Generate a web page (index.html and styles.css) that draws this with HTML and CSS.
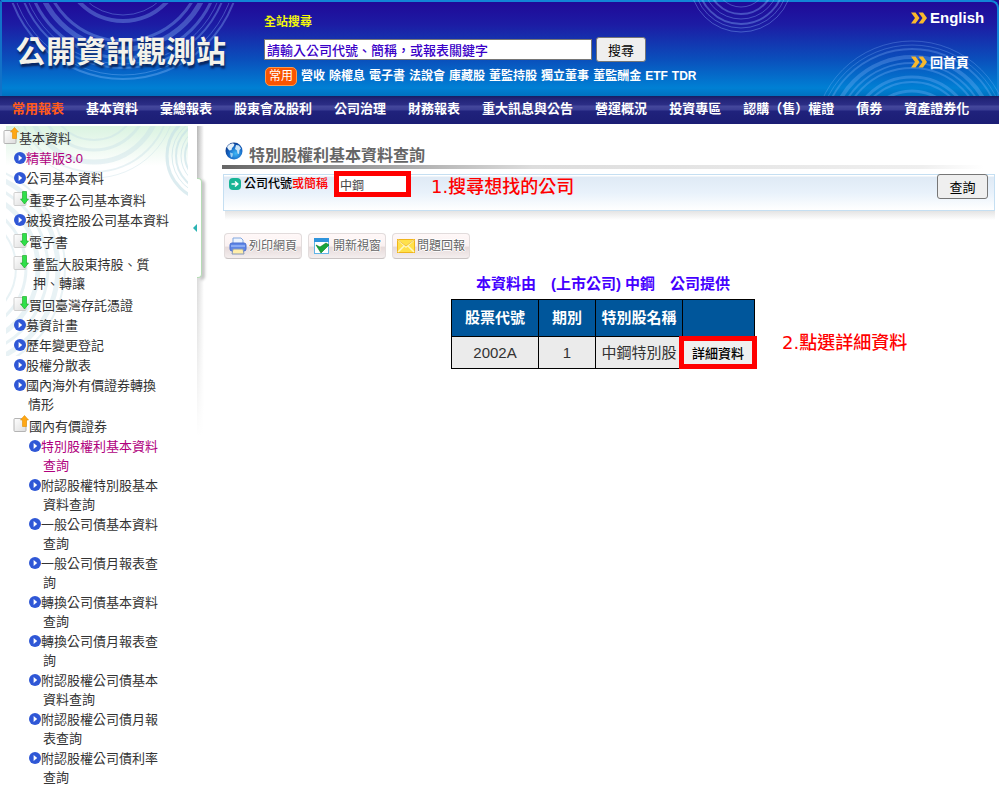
FILE: index.html
```
<!DOCTYPE html>
<html lang="zh-Hant">
<head>
<meta charset="utf-8">
<title>公開資訊觀測站</title>
<link rel="stylesheet" href="styles.css">
</head>
<body>
<svg class="defs" aria-hidden="true">
  <defs>
    <symbol id="i-go" viewBox="0 0 12 12"><circle cx="6" cy="6" r="6" fill="#2f57d6"/><path d="M4.600 3v6L8.200 6z" fill="#fff"/></symbol>
    <linearGradient id="g-page" x1="0" y1="0" x2="1" y2="1"><stop offset="0" stop-color="#fff"/><stop offset="1" stop-color="#dcdcdc"/></linearGradient>
    <symbol id="i-open" viewBox="0 0 16 18"><rect x="1" y="3.500" width="12" height="13" rx="1" fill="url(#g-page)" stroke="#b4b4b4"/><path d="M11.500 0.500l4 4.500h-2v6.500h-4v-6.500h-2z" fill="#ffa714" stroke="#e08e00" stroke-width=".6"/></symbol>
    <symbol id="i-closed" viewBox="0 0 16 18"><rect x="1" y="3.500" width="12" height="13" rx="1" fill="url(#g-page)" stroke="#cfcfcf"/><path d="M11.500 15l4-5h-2v-7.500h-4v7.500h-2z" fill="#2fe04a" stroke="#12a51c" stroke-width=".6"/></symbol>
    <symbol id="i-more" viewBox="0 0 16 12"><path d="M0 0.500h4.500l4 5.500-4 5.500h-4.500l4-5.500zM7.500 .5h4.500l4 5.500-4 5.500h-4.500l4-5.500z" fill="#f9b92c"/></symbol>
  </defs>
</svg>

<header class="site">
  <div class="banner">
    <svg class="rings" aria-hidden="true" fill="none" stroke="#8fc0ff">
      <g stroke-opacity=".34" stroke-width="2">
        <circle cx="123" cy="-42" r="118"/><circle cx="123" cy="-42" r="114" stroke-width="1"/>
        <circle cx="123" cy="-42" r="107"/><circle cx="123" cy="-42" r="103" stroke-width="1"/>
        <circle cx="123" cy="-42" r="97" stroke-width="3"/><circle cx="123" cy="-42" r="88" stroke-width="5"/>
        <circle cx="123" cy="-42" r="80" stroke-width="3"/><circle cx="123" cy="-42" r="60" stroke-width="4"/>
        <circle cx="123" cy="-42" r="54" stroke-width="1"/>
      </g>
    </svg>
    <svg class="rings rings-right" viewBox="0 0 320 96" aria-hidden="true" fill="none" stroke="#8fc0ff">
      <g stroke-opacity=".36">
        <circle cx="62" cy="-19" r="51"/><circle cx="62" cy="-19" r="47"/><circle cx="62" cy="-19" r="43" stroke-width="2"/><circle cx="62" cy="-19" r="38"/><circle cx="62" cy="-19" r="33" stroke-width="2"/><circle cx="62" cy="-19" r="26"/>
      </g>
      <g stroke-opacity=".28" stroke-width="2">
        <circle cx="233" cy="139" r="98" stroke-width="1"/><circle cx="233" cy="139" r="94" stroke-width="1"/><circle cx="233" cy="139" r="90"/>
        <circle cx="233" cy="139" r="82" stroke-width="4"/><circle cx="233" cy="139" r="76"/><circle cx="233" cy="139" r="71"/>
        <circle cx="233" cy="139" r="62" stroke-width="3"/><circle cx="233" cy="139" r="57"/><circle cx="233" cy="139" r="48" stroke-width="3"/>
      </g>
    </svg>
    <h1 class="logo">公開資訊觀測站</h1>
    <form class="search">
      <label class="search-label" for="q">全站搜尋</label>
      <div class="search-row">
        <input class="search-box" id="q" type="text" value="請輸入公司代號、簡稱，或報表關鍵字">
        <button class="button" type="button">搜尋</button>
      </div>
      <div class="hot">
        <span class="hot-tag">常用</span>
        <a href="#">營收</a> <a href="#">除權息</a> <a href="#">電子書</a> <a href="#">法說會</a> <a href="#">庫藏股</a> <a href="#">董監持股</a> <a href="#">獨立董事</a> <a href="#">董監酬金</a> <a href="#">ETF</a> <a href="#">TDR</a>
      </div>
    </form>
    <div class="quick">
      <a class="quick-link english" href="#"><svg class="more"><use href="#i-more"/></svg>English</a>
      <a class="quick-link" href="#"><svg class="more"><use href="#i-more"/></svg>回首頁</a>
    </div>
  </div>
  <nav class="menu">
    <a class="current" href="#">常用報表</a><a href="#">基本資料</a><a href="#">彙總報表</a><a href="#">股東會及股利</a><a href="#">公司治理</a><a href="#">財務報表</a><a href="#">重大訊息與公告</a><a href="#">營運概況</a><a href="#">投資專區</a><a href="#">認購（售）權證</a><a href="#">債券</a><a href="#">資產證券化</a>
  </nav>
</header>

<div class="page">
  <aside class="side">
    <svg class="side-rings" viewBox="0 0 182 230" aria-hidden="true" fill="none" stroke="#c5dfe6">
      <g stroke-opacity=".6">
        <circle cx="206" cy="30" r="45" stroke-width="3"/><circle cx="206" cy="30" r="40"/><circle cx="206" cy="30" r="36" stroke-width="2"/><circle cx="206" cy="30" r="31"/><circle cx="206" cy="30" r="27" stroke-width="2"/>
      </g>
      <g stroke-opacity=".4">
        <circle cx="88" cy="-30" r="66" stroke-width="5"/><circle cx="88" cy="-30" r="76" stroke-width="2"/><circle cx="88" cy="-30" r="82"/><circle cx="88" cy="-30" r="54" stroke-width="3"/><circle cx="88" cy="-30" r="44" stroke-width="2"/>
        <circle cx="-46" cy="142" r="105" stroke-width="2"/><circle cx="-46" cy="142" r="98" stroke-width="5"/><circle cx="-46" cy="142" r="88" stroke-width="3"/><circle cx="-46" cy="142" r="78" stroke-width="5"/><circle cx="-46" cy="142" r="66" stroke-width="3"/><circle cx="-46" cy="142" r="56" stroke-width="2"/>
      </g>
    </svg>
    <ul class="tree">
      <li class="doc top"><svg><use href="#i-open"/></svg><a href="#">基本資料</a></li>
      <li class="active"><svg><use href="#i-go"/></svg><a href="#">精華版3.0</a></li>
      <li><svg><use href="#i-go"/></svg><a href="#">公司基本資料</a></li>
      <li class="doc"><svg><use href="#i-closed"/></svg><a href="#">重要子公司基本資料</a></li>
      <li><svg><use href="#i-go"/></svg><a href="#">被投資控股公司基本資料</a></li>
      <li class="doc"><svg><use href="#i-closed"/></svg><a href="#">電子書</a></li>
      <li class="doc"><svg><use href="#i-closed"/></svg><a href="#">&nbsp;董監大股東持股、質<br>押、轉讓</a></li>
      <li class="doc"><svg><use href="#i-closed"/></svg><a href="#">買回臺灣存託憑證</a></li>
      <li><svg><use href="#i-go"/></svg><a href="#">募資計畫</a></li>
      <li><svg><use href="#i-go"/></svg><a href="#">歷年變更登記</a></li>
      <li><svg><use href="#i-go"/></svg><a href="#">股權分散表</a></li>
      <li><svg><use href="#i-go"/></svg><a href="#">國內海外有價證券轉換<br>情形</a></li>
      <li class="doc"><svg><use href="#i-open"/></svg><a href="#">國內有價證券</a></li>
      <li class="sub active"><svg><use href="#i-go"/></svg><a href="#">特別股權利基本資料<br>查詢</a></li>
      <li class="sub"><svg><use href="#i-go"/></svg><a href="#">附認股權特別股基本<br>資料查詢</a></li>
      <li class="sub"><svg><use href="#i-go"/></svg><a href="#">一般公司債基本資料<br>查詢</a></li>
      <li class="sub"><svg><use href="#i-go"/></svg><a href="#">一般公司債月報表查<br>詢</a></li>
      <li class="sub"><svg><use href="#i-go"/></svg><a href="#">轉換公司債基本資料<br>查詢</a></li>
      <li class="sub"><svg><use href="#i-go"/></svg><a href="#">轉換公司債月報表查<br>詢</a></li>
      <li class="sub"><svg><use href="#i-go"/></svg><a href="#">附認股權公司債基本<br>資料查詢</a></li>
      <li class="sub"><svg><use href="#i-go"/></svg><a href="#">附認股權公司債月報<br>表查詢</a></li>
      <li class="sub"><svg><use href="#i-go"/></svg><a href="#">附認股權公司債利率<br>查詢</a></li>
    </ul>
  </aside>
  <div class="divider">
    <button class="collapse" type="button" aria-label="收合選單"><svg class="collapse-arrow" viewBox="0 0 4 8"><path d="M4 0v8L0 4z" fill="#2bb3b3"/></svg></button>
  </div>
  <main class="main">
    <div class="heading">
      <svg class="globe" viewBox="0 0 18 18" aria-hidden="true"><defs><radialGradient id="g-globe" cx=".6" cy=".65" r=".7"><stop offset="0" stop-color="#3fb8f5"/><stop offset=".6" stop-color="#1465c4"/><stop offset="1" stop-color="#0a3180"/></radialGradient></defs><circle cx="9" cy="9" r="8.500" fill="url(#g-globe)"/><path d="M2 5c1-2 3-3.500 6-3.800l1.500 1.300-1 2-1.500 1.500-.5 2-2 .5L3 7z" fill="#e4f1fb"/><path d="M11 3l3 .5 2 3-1.500 1.500-.5 4-1.500-.5-.5-3-2-1.500z" fill="#c9e4f7"/><path d="M5 10.500l3 1-.5 3-1.500 1z" fill="#9ed0f2"/></svg>
      <h2 class="title">特別股權利基本資料查詢</h2>
    </div>
    <div class="title-bar"></div>
    <form class="query">
      <svg class="query-icon" viewBox="0 0 12 12" aria-hidden="true"><rect width="12" height="12" rx="4" fill="#18b596"/><path d="M2.500 6h6M6 3.500L8.800 6 6 8.500" fill="none" stroke="#fff" stroke-width="1.500"/></svg>
      <label class="query-label" for="co">公司代號<span class="red">或簡稱</span></label>
      <input class="query-box" id="co" type="text" value="中鋼">
      <p class="note">1.搜尋想找的公司</p>
      <button class="button query-button" type="button">查詢</button>
    </form>
    <div class="query-shadow"></div>
    <div class="tools">
      <button class="tool" type="button"><svg viewBox="0 0 18 18"><path d="M4 1h8l2 2v5H4z" fill="#eef5ff" stroke="#83a9df"/><rect x="1" y="6" width="16" height="8" rx="2" fill="#5f86e6" stroke="#4a6fd0"/><path d="M2 9h14" stroke="#b9d1ff"/><path d="M4 12h10l1 5H3z" fill="#ffeeaa" stroke="#8597b8"/></svg>列印網頁</button>
      <button class="tool" type="button"><svg viewBox="0 0 18 18"><rect x="1.500" y="1.500" width="14" height="15" fill="#fff" stroke="#62b5e6"/><path d="M1 1h15v4H1z" fill="#2f94dc"/><path d="M3 8l4 2 6-4 3 2-8 8z" fill="#17a63c" stroke="#08751f" stroke-width=".6"/></svg>開新視窗</button>
      <button class="tool" type="button"><svg viewBox="0 0 18 18"><rect x=".5" y="2.500" width="17" height="13" fill="#ffe14b" stroke="#f0b51c"/><path d="M1 3l8 7 8-7M1 15l6-6M17 15l-6-6" fill="none" stroke="#fff7c0" stroke-width="1.500"/><path d="M1 3l8 6 8-6" fill="none" stroke="#e6ad20" stroke-width=".7"/></svg>問題回報</button>
    </div>
    <div class="result">
      <p class="source">本資料由　(上市公司) 中鋼　公司提供</p>
      <div class="table-wrap">
        <table class="stocks">
          <thead><tr><th class="c-code">股票代號</th><th class="c-term">期別</th><th class="c-name">特別股名稱</th><th class="c-act"></th></tr></thead>
          <tbody><tr><td>2002A</td><td>1</td><td>中鋼特別股</td><td><button class="detail" type="button">詳細資料</button></td></tr></tbody>
        </table>
        <p class="note note-detail">2.點選詳細資料</p>
      </div>
    </div>
  </main>
</div>
</body>
</html>
```

FILE: styles.css
```
* { box-sizing: border-box; }
body { margin: 0; background: #fff; color: #333; font-family: "Liberation Sans", "Noto Sans CJK TC", sans-serif; font-size: 13px; }
a { color: inherit; text-decoration: none; }
h1, h2, p, ul { margin: 0; padding: 0; }
input, button { font-family: inherit; margin: 0; }
.defs { position: absolute; width: 0; height: 0; }

.site { margin-right: 8px; }
.banner { position: relative; display: flex; height: 96px; padding: 3px 15px 0 16px; overflow: hidden; background: linear-gradient(#200a98 3px, #1c1ca4 25px, #0a50bc 60px, #0080d4 88px, #0071c0); }
.banner::before { content: ""; position: absolute; inset: 0; border: 2px solid #1284d6; border-bottom: 0; border-radius: 2px 8px 0 0; border-left-color: #1272c8; }
.rings { position: absolute; left: 0; top: 3px; width: 300px; height: 93px; }
.rings-right { left: auto; right: 0; top: 0; width: 320px; height: 96px; }
.logo { position: relative; width: 248px; padding-top: 27px; font-size: 30px; line-height: 44px; font-weight: 700; color: #f4f2ea; text-shadow: 1px 3px 2px #08265f; white-space: nowrap; }
.search { position: relative; flex: 1; padding-top: 10px; }
.search-label { display: block; font-size: 12px; font-weight: 700; line-height: 18px; color: #f3f80a; }
.search-row { display: flex; align-items: center; gap: 4px; height: 26px; margin-top: 5px; }
.search-box { width: 328px; height: 21px; padding: 0 2px; border: 1px solid #767676; background: #fff; color: #3a00c8; font-size: 13px; font-weight: 500; }
.button { height: 25px; width: 50px; padding: 0; border: 1px solid #767676; border-radius: 3px; background: #efefef; color: #000; font-size: 13px; }
.hot { display: flex; align-items: center; gap: 4px; margin-top: 4px; height: 20px; color: #fff; font-size: 12px; font-weight: 700; line-height: 20px; white-space: nowrap; }
.hot-tag { padding: 0 3px; border: 1px solid #ff9a4a; border-radius: 5px; background: #f95400; font-weight: 400; line-height: 17px; margin-left: 1px; }
.quick { position: relative; display: flex; flex-direction: column; gap: 25px; padding-top: 5px; width: 73px; color: #fff; font-weight: 700; }
.quick-link { display: flex; align-items: center; gap: 3px; height: 19px; white-space: nowrap; }
.english { font-size: 15px; }
.more { flex: none; width: 16px; height: 12px; }
.menu { display: flex; gap: 22px; height: 28px; padding-left: 12px; overflow: hidden; background: linear-gradient(#171c62, #222478 3px, #2c2e86 9px, #45489c 10px, #3a3d94 14px, #20227c 15px, #1b1d74 28px); color: #fff; font-size: 13px; font-weight: 700; line-height: 25px; white-space: nowrap; }
.menu .current { color: #ff5a1c; }

.page { display: flex; align-items: flex-start; padding: 2px 8px 0 0; }
.side { position: relative; width: 182px; margin-left: 6px; background: linear-gradient(#daf3e1, #fff 40px); }
.side-rings { position: absolute; left: 0; top: 0; width: 182px; height: 230px; }
.tree { position: relative; list-style: none; font-size: 13px; line-height: 19px; white-space: nowrap; }
.tree li { display: flex; align-items: flex-start; padding: 1px 0 0 8px; }
.tree svg { flex: none; width: 12px; height: 12px; margin-top: 3px; }
.tree a { padding-left: 2px; text-indent: -2px; }
.tree .doc { padding-top: 3px; padding-left: 7px; }
.tree .doc svg { width: 16px; height: 18px; margin-top: -2px; }
.tree .doc a { padding-left: 4px; text-indent: -4px; }
.tree .top { margin-left: -10px; }
.tree .sub { padding-left: 23px; }
.tree .active { color: #b0007d; }

.divider { position: relative; width: 9px; height: 310px; margin-left: 9px; background: linear-gradient(#fff0, #fff), linear-gradient(90deg, #b5b5b5, #fff 7px); }
.collapse { position: absolute; left: 0; top: 52px; width: 5px; height: 100px; padding: 0; border: 1px solid #b5dcb5; border-left: 0; border-radius: 0 4px 4px 0; background: #fff; box-shadow: 3px 2px 3px #c5c5c5; }
.collapse-arrow { position: absolute; left: -4px; top: 45px; width: 4px; height: 8px; }

.main { flex: 1; margin-left: 16px; padding-top: 15px; min-width: 0; }
.heading { display: flex; padding-left: 3px; height: 24px; gap: 6px; }
.globe { width: 18px; height: 18px; margin-top: 1px; }
.title { font-size: 16px; line-height: 30px; font-weight: 700; color: #666; white-space: nowrap; }
.title-bar { height: 4px; background: linear-gradient(90deg, #666, #ddd 40%, #efefef 90%, #fff 98%); }
.query { display: flex; align-items: flex-start; height: 37px; margin: 5px 4px 0 1px; padding: 0 6px 0 5px; border: 1px solid #c5dff2; background: linear-gradient(#fff 1px, #dfeaf5 2px, #e9f2fb 18px, #fff); }
.query-icon { flex: none; width: 12px; height: 12px; margin-top: 3px; }
.query-label { margin-left: 3px; color: #000; font-size: 12px; font-weight: 500; line-height: 18px; white-space: nowrap; }
.red { color: #f00; }
.query-box { width: 77px; height: 26px; margin: -4px 0 0 6px; padding: 0 1px; border: 5px solid #f00; background: #fff; color: #444; font-size: 12px; }
.note { margin-left: 20px; color: #f00; font-family: "DejaVu Sans", "Noto Sans CJK TC", sans-serif; font-size: 18px; font-weight: 500; line-height: 24px; white-space: nowrap; }
.query-button { width: 51px; margin: -1px 0 0 auto; }
.query-shadow { height: 9px; margin: 0 4px 0 3px; background: linear-gradient(#e4e4e4, #fff); }
.tools { display: flex; gap: 6px; margin: 13px 0 0 2px; }
.tool { display: flex; align-items: center; gap: 2px; width: 78px; height: 26px; padding: 0 4px; border: 1px solid #e2dcdc; border-bottom-color: #c9c4c4; border-radius: 4px; background: linear-gradient(#fff8f8, #faf1f1 50%, #e6dada 55%, #f4eeee); color: #666; font-size: 12px; line-height: 20px; text-shadow: 1px 0 #fff, -1px 0 #fff, 0 1px #fff, 0 -1px #fff; white-space: nowrap; }
.tool svg { flex: none; width: 18px; height: 18px; }
.result { display: flex; flex-direction: column; align-items: center; margin: 15px 16px 0 1px; }
.source { font-size: 15px; line-height: 20px; font-weight: 700; color: #40f; }
.table-wrap { position: relative; margin-top: 5px; }
.stocks { border-collapse: collapse; font-size: 15px; line-height: 22px; color: #333; white-space: nowrap; }
.stocks th, .stocks td { padding: 0; border: 1px solid #000; text-align: center; }
.stocks th { height: 37px; background: #00569b; color: #fff; font-weight: 700; }
.stocks td { height: 32px; background: #ebebeb; }
.c-code { width: 87px; }
.c-term { width: 57px; }
.c-name { width: 87px; }
.c-act { width: 72px; }
.detail { position: relative; display: block; width: 78px; height: 33px; margin: -1px -3px -1px -4px; padding: 0; border: 5px solid #f00; background: #efefef; color: #000; font-size: 13px; font-weight: 500; }
.note-detail { position: absolute; left: 100%; top: 32px; margin-left: 27px; }
```
